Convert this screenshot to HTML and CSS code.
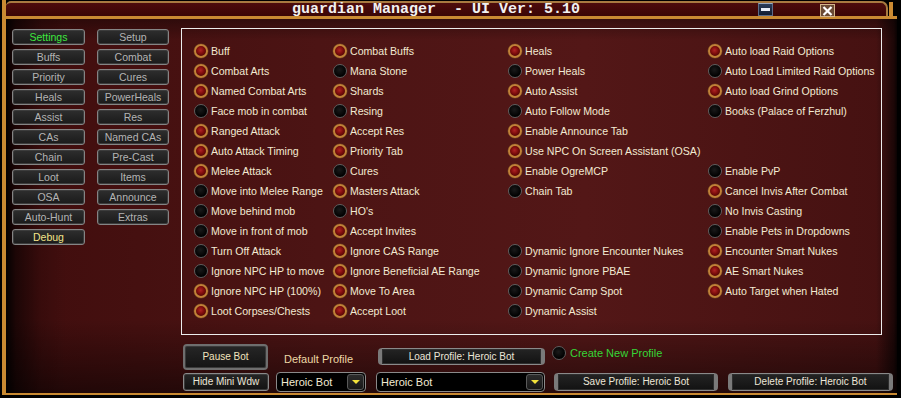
FILE: index.html
```html
<!DOCTYPE html>
<html>
<head>
<meta charset="utf-8">
<link rel="stylesheet" href="styles.css">
</head>
<body>
<div class="window">
  <div class="titlebar">
    <div class="tb-face">
      <span class="title">guardian Manager  - UI Ver: 5.10</span>
      <span class="tb-min"><span class="dash"></span></span>
      <span class="tb-close"><svg width="11" height="10" viewBox="0 0 11 10"><path d="M1.5 1 L9.5 9 M9.5 1 L1.5 9" stroke="#fff" stroke-width="2.2" fill="none"/></svg></span>
    </div>
    <div class="tb-edge"></div>
  </div>
  <div class="main">
    <nav class="nav">
      <div class="nbtn green">Settings</div><div class="nbtn">Setup</div>
      <div class="nbtn">Buffs</div><div class="nbtn">Combat</div>
      <div class="nbtn">Priority</div><div class="nbtn">Cures</div>
      <div class="nbtn">Heals</div><div class="nbtn">PowerHeals</div>
      <div class="nbtn">Assist</div><div class="nbtn">Res</div>
      <div class="nbtn">CAs</div><div class="nbtn">Named CAs</div>
      <div class="nbtn">Chain</div><div class="nbtn">Pre-Cast</div>
      <div class="nbtn">Loot</div><div class="nbtn">Items</div>
      <div class="nbtn">OSA</div><div class="nbtn">Announce</div>
      <div class="nbtn">Auto-Hunt</div><div class="nbtn">Extras</div>
      <div class="nbtn yellow">Debug</div>
    </nav>
    <div class="right">
      <div class="panel">
        <div class="opt"><span class="rb on"></span>Buff</div>
        <div class="opt"><span class="rb on"></span>Combat Buffs</div>
        <div class="opt"><span class="rb on"></span>Heals</div>
        <div class="opt"><span class="rb on"></span>Auto load Raid Options</div>

        <div class="opt"><span class="rb on"></span>Combat Arts</div>
        <div class="opt"><span class="rb off"></span>Mana Stone</div>
        <div class="opt"><span class="rb off"></span>Power Heals</div>
        <div class="opt"><span class="rb off"></span>Auto Load Limited Raid Options</div>

        <div class="opt"><span class="rb on"></span>Named Combat Arts</div>
        <div class="opt"><span class="rb on"></span>Shards</div>
        <div class="opt"><span class="rb on"></span>Auto Assist</div>
        <div class="opt"><span class="rb on"></span>Auto load Grind Options</div>

        <div class="opt"><span class="rb off"></span>Face mob in combat</div>
        <div class="opt"><span class="rb off"></span>Resing</div>
        <div class="opt"><span class="rb off"></span>Auto Follow Mode</div>
        <div class="opt"><span class="rb off"></span>Books (Palace of Ferzhul)</div>

        <div class="opt"><span class="rb on"></span>Ranged Attack</div>
        <div class="opt"><span class="rb on"></span>Accept Res</div>
        <div class="opt"><span class="rb on"></span>Enable Announce Tab</div>
        <div class="opt"></div>

        <div class="opt"><span class="rb on"></span>Auto Attack Timing</div>
        <div class="opt"><span class="rb on"></span>Priority Tab</div>
        <div class="opt"><span class="rb on"></span>Use NPC On Screen Assistant (OSA)</div>
        <div class="opt"></div>

        <div class="opt"><span class="rb on"></span>Melee Attack</div>
        <div class="opt"><span class="rb off"></span>Cures</div>
        <div class="opt"><span class="rb on"></span>Enable OgreMCP</div>
        <div class="opt"><span class="rb off"></span>Enable PvP</div>

        <div class="opt"><span class="rb off"></span>Move into Melee Range</div>
        <div class="opt"><span class="rb on"></span>Masters Attack</div>
        <div class="opt"><span class="rb off"></span>Chain Tab</div>
        <div class="opt"><span class="rb on"></span>Cancel Invis After Combat</div>

        <div class="opt"><span class="rb off"></span>Move behind mob</div>
        <div class="opt"><span class="rb off"></span>HO's</div>
        <div class="opt"></div>
        <div class="opt"><span class="rb off"></span>No Invis Casting</div>

        <div class="opt"><span class="rb off"></span>Move in front of mob</div>
        <div class="opt"><span class="rb on"></span>Accept Invites</div>
        <div class="opt"></div>
        <div class="opt"><span class="rb off"></span>Enable Pets in Dropdowns</div>

        <div class="opt"><span class="rb off"></span>Turn Off Attack</div>
        <div class="opt"><span class="rb on"></span>Ignore CAS Range</div>
        <div class="opt"><span class="rb off"></span>Dynamic Ignore Encounter Nukes</div>
        <div class="opt"><span class="rb on"></span>Encounter Smart Nukes</div>

        <div class="opt"><span class="rb off"></span>Ignore NPC HP to move</div>
        <div class="opt"><span class="rb on"></span>Ignore Beneficial AE Range</div>
        <div class="opt"><span class="rb off"></span>Dynamic Ignore PBAE</div>
        <div class="opt"><span class="rb on"></span>AE Smart Nukes</div>

        <div class="opt"><span class="rb on"></span>Ignore NPC HP (100%)</div>
        <div class="opt"><span class="rb on"></span>Move To Area</div>
        <div class="opt"><span class="rb off"></span>Dynamic Camp Spot</div>
        <div class="opt"><span class="rb on"></span>Auto Target when Hated</div>

        <div class="opt"><span class="rb on"></span>Loot Corpses/Chests</div>
        <div class="opt"><span class="rb on"></span>Accept Loot</div>
        <div class="opt"><span class="rb off"></span>Dynamic Assist</div>
        <div class="opt"></div>
      </div>
      <div class="controls">
        <div class="crow1">
          <div class="btn-big">Pause Bot</div>
          <div class="lbl">Default Profile</div>
          <div class="bbtn load">Load Profile: Heroic Bot</div>
          <div class="create"><span class="rb off"></span>Create New Profile</div>
        </div>
        <div class="crow2">
          <div class="btn-hide">Hide Mini Wdw</div>
          <div class="dd dd1"><span class="dd-text">Heroic Bot</span><span class="dd-arrow"><span class="tri"></span></span></div>
          <div class="dd dd2"><span class="dd-text">Heroic Bot</span><span class="dd-arrow"><span class="tri"></span></span></div>
          <div class="bbtn save">Save Profile: Heroic Bot</div>
          <div class="bbtn del">Delete Profile: Heroic Bot</div>
        </div>
      </div>
    </div>
  </div>
</div>
</body>
</html>
```
FILE: styles.css
```css
html, body {
  margin: 0;
  padding: 0;
}
body {
  background: #000;
  width: 901px;
  height: 398px;
  overflow: hidden;
  font-family: "Liberation Sans", Arial, sans-serif;
}
.window {
  margin-left: 2px;
  width: 895px;
  height: 395px;
  box-sizing: border-box;
  border-left: 4px solid #c98a32;
  border-bottom: 2px solid #c98a32;
  display: flex;
  flex-direction: column;
  background:
    linear-gradient(to right, rgba(0,0,0,.95) 0, rgba(0,0,0,.55) 10px, rgba(0,0,0,.15) 35px, rgba(0,0,0,0) 60px, rgba(0,0,0,0) 870px, rgba(0,0,0,.6) 888px, #000 893px),
    linear-gradient(to bottom, rgba(0,0,0,.8) 0, rgba(0,0,0,.45) 12px, rgba(0,0,0,0) 40px, rgba(0,0,0,0) 320px, rgba(0,0,0,.5) 100%),
    linear-gradient(to right, #400d0d 0, #4c1414 35%, #531717 65%, #451111 100%);
}
.titlebar {
  height: 19px;
  box-sizing: border-box;
  border-bottom: 3px solid #c98a32;
  display: flex;
  background: #000;
}
.tb-face {
  flex: 1;
  box-sizing: border-box;
  margin-top: 1px;
  border-top: 2px solid #a87a40;
  border-right: 2px solid #a87a40;
  border-radius: 5px 7px 0 0;
  background: linear-gradient(to bottom, #4e0c0c, #3a0606);
  display: flex;
  align-items: center;
}
.tb-edge {
  width: 4px;
  margin-left: 1px;
  margin-right: 4px;
  margin-top: 2px;
  background: #c98a32;
}
.title {
  white-space: pre;
  font-family: "Liberation Mono", "DejaVu Sans Mono", monospace;
  font-weight: bold;
  font-size: 15px;
  line-height: 13px;
  color: #f2f2f2;
  margin-left: 286px;
}
.tb-min {
  margin-left: 178px;
  width: 15px;
  height: 13px;
  box-sizing: border-box;
  border: 1px solid #5c6c88;
  border-top-color: #9aa8c0;
  background: linear-gradient(#2a3c5a, #101c30);
  display: flex;
  align-items: center;
  justify-content: center;
}
.dash {
  width: 9px;
  height: 3px;
  background: #e8eef8;
}
.tb-close {
  margin-left: 47px;
  margin-top: 2px;
  width: 15px;
  height: 13px;
  box-sizing: border-box;
  border: 1px solid #d4b48a;
  background: #6a4a34;
  display: flex;
  align-items: center;
  justify-content: center;
}
.main {
  display: flex;
  padding: 9px 0 0 6px;
  gap: 12px;
}
.nav {
  margin-top: 1px;
  display: grid;
  grid-template-columns: 73px 72px;
  grid-auto-rows: 16px;
  column-gap: 12px;
  row-gap: 4px;
  align-content: start;
}
.nbtn {
  box-sizing: border-box;
  border: 1px solid #858585;
  border-radius: 3px;
  background: linear-gradient(#2e2e2e, #1a1a1a);
  box-shadow: inset 0 0 0 1px #3c3c3c;
  color: #b4b4b4;
  font-size: 10.5px;
  line-height: 14px;
  text-align: center;
  white-space: nowrap;
}
.nbtn.green { color: #3fe83f; }
.nbtn.yellow { color: #f2e48a; }
.right {
  display: flex;
  flex-direction: column;
}
.panel {
  width: 701px;
  height: 307px;
  box-sizing: border-box;
  border: 1px solid #ececec;
  padding: 12px 0 0 12px;
  display: grid;
  grid-template-columns: 139px 175px 200px 1fr;
  grid-auto-rows: 20px;
}
.opt {
  display: flex;
  align-items: center;
  gap: 3px;
  font-size: 10.6px;
  color: #f3ead2;
  white-space: nowrap;
}
.rb {
  width: 14px;
  height: 14px;
  box-sizing: border-box;
  border-radius: 50%;
  flex: none;
}
.rb.on {
  border: 2px solid #c08238;
  background: radial-gradient(circle at 45% 42%, #b02424 0, #7c0c0c 45%, #4a0606 80%);
  box-shadow: 0 0 0 0.5px #6a4020;
}
.rb.off {
  border: 1.5px solid #5e5e5e;
  background: radial-gradient(circle at 45% 40%, #1a1a1a 0, #000 70%);
}
.controls {
  margin-top: 9px;
  padding-left: 2px;
  display: flex;
  flex-direction: column;
  gap: 2px;
}
.crow1, .crow2 {
  display: flex;
  align-items: flex-start;
}
.crow1 > *, .crow2 > * {
  flex: none;
}
.crow1 { height: 26px; }
.crow2 { height: 20px; }
.btn-big {
  width: 85px;
  height: 26px;
  box-sizing: border-box;
  border: 2px solid #6e6e6e;
  border-radius: 4px;
  background: linear-gradient(#262626, #141414);
  box-shadow: inset 0 0 0 1px #3a3a3a;
  color: #f2e4be;
  font-size: 10px;
  line-height: 22px;
  text-align: center;
}
.lbl {
  margin-left: 16px;
  width: 94px;
  font-size: 11px;
  color: #eed8a6;
  padding-top: 9px;
  white-space: nowrap;
}
.bbtn {
  box-sizing: border-box;
  height: 18px;
  border: 1px solid #8a8a8a;
  border-left: 4px solid #7a7a7a;
  border-right: 4px solid #7a7a7a;
  border-radius: 4px;
  background: linear-gradient(#242424, #121212);
  box-shadow: inset 0 0 0 1px #2e2e2e;
  color: #ece6d8;
  font-size: 10px;
  line-height: 16px;
  text-align: center;
  white-space: nowrap;
}
.load {
  width: 167px;
  height: 17px;
  line-height: 15px;
  margin-top: 4px;
}
.create {
  margin-left: 7px;
  margin-top: 2px;
  display: flex;
  align-items: center;
  gap: 4px;
  font-size: 11px;
  color: #36d636;
  white-space: nowrap;
}
.btn-hide {
  width: 86px;
  height: 18px;
  margin-top: 1px;
  box-sizing: border-box;
  border: 1px solid #8a8a8a;
  border-radius: 3px;
  background: linear-gradient(#262626, #121212);
  box-shadow: inset 0 0 0 1px #3a3a3a;
  color: #ece6d8;
  font-size: 10px;
  line-height: 16px;
  text-align: center;
}
.dd {
  height: 20px;
  box-sizing: border-box;
  border: 1px solid #8a8a8a;
  border-radius: 4px;
  background: #000;
  display: flex;
  align-items: center;
  justify-content: space-between;
}
.dd1 { margin-left: 7px; width: 90px; }
.dd2 { margin-left: 10px; width: 169px; }
.dd-text {
  font-size: 11px;
  color: #f3ead2;
  padding-left: 4px;
  white-space: nowrap;
}
.dd-arrow {
  width: 17px;
  height: 16px;
  margin-right: 1px;
  box-sizing: border-box;
  border: 1px solid #5a5a5a;
  border-radius: 3px;
  background: linear-gradient(#2c2c2c, #181818);
  display: flex;
  align-items: center;
  justify-content: center;
}
.tri {
  width: 0;
  height: 0;
  border-left: 4px solid transparent;
  border-right: 4px solid transparent;
  border-top: 4px solid #f2e23a;
}
.save {
  margin-left: 9px;
  margin-top: 1px;
  width: 164px;
}
.del {
  margin-left: 10px;
  margin-top: 1px;
  width: 165px;
}
```
